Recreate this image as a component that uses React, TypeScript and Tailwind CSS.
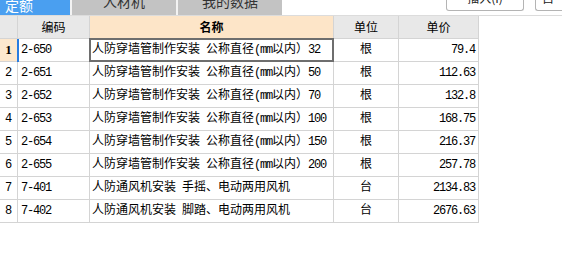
const rows = [
  { code: '2-650', name: '人防穿墙管制作安装 公称直径(mm以内）32', unit: '根', price: '79.4' },
  { code: '2-651', name: '人防穿墙管制作安装 公称直径(mm以内）50', unit: '根', price: '112.63' },
  { code: '2-652', name: '人防穿墙管制作安装 公称直径(mm以内）70', unit: '根', price: '132.8' },
  { code: '2-653', name: '人防穿墙管制作安装 公称直径(mm以内）100', unit: '根', price: '168.75' },
  { code: '2-654', name: '人防穿墙管制作安装 公称直径(mm以内）150', unit: '根', price: '216.37' },
  { code: '2-655', name: '人防穿墙管制作安装 公称直径(mm以内）200', unit: '根', price: '257.78' },
  { code: '7-401', name: '人防通风机安装 手摇、电动两用风机', unit: '台', price: '2134.83' },
  { code: '7-402', name: '人防通风机安装 脚踏、电动两用风机', unit: '台', price: '2676.63' },
]

// 半角字符收紧一点，接近宋体的宽度
function Mixed({ text }: { text: string }) {
  return (
    <>
      {text.split(/([\x20-\x7E]+)/).map((part, i) =>
        /^[\x20-\x7E]+$/.test(part) ? (
          <span key={i} className="tracking-[-1.2px] whitespace-pre">{part}</span>
        ) : (
          <span key={i}>{part}</span>
        ),
      )}
    </>
  )
}

export default function App() {
  const cell = 'h-[23px] border-r border-b border-[#d4d4d4] flex items-center'

  return (
    <div className="w-[562px] h-[254px] bg-white overflow-hidden font-['Liberation_Mono','Noto_Sans_CJK_SC',monospace] text-[12px] text-black">
      {/* 顶部标签 */}
      <div className="flex h-[16px] bg-[#f3f3f3] overflow-hidden border-b border-[#dcdcdc]">
        <div className="w-[70px] h-[15px] bg-[#4a9ff0] text-white overflow-hidden font-['Noto_Sans_CJK_SC',sans-serif] text-[14px]">
          <span className="block leading-[16px] -mt-[3px] pl-[5px]">定额</span>
        </div>
        <div className="w-[104px] h-[15px] ml-[2px] bg-[#c3c3c3] text-[#333] overflow-hidden font-['Noto_Sans_CJK_SC',sans-serif] text-[14px] text-center">
          <span className="block leading-[16px] -mt-[7px]">人材机</span>
        </div>
        <div className="w-[104px] h-[15px] ml-[2px] bg-[#c3c3c3] text-[#333] overflow-hidden font-['Noto_Sans_CJK_SC',sans-serif] text-[14px] text-center">
          <span className="block leading-[16px] -mt-[7px]">我的数据</span>
        </div>
        <div className="flex-1 flex justify-end bg-white pl-[164px] gap-[11px]">
          <div className="w-[78px] h-[11px] bg-white border border-t-0 border-[#b4b4b4] rounded-b-[3px] overflow-hidden text-center font-['Noto_Sans_CJK_SC',sans-serif] text-[#222]">
            <span className="block leading-[14px] -mt-[9px]">插入(I)</span>
          </div>
          <div className="flex-1 h-[11px] bg-white border border-t-0 border-r-0 border-[#b4b4b4] rounded-bl-[3px] overflow-hidden font-['Noto_Sans_CJK_SC',sans-serif] text-[#222] pl-[6px]">
            <span className="block leading-[14px] -mt-[9px]">自</span>
          </div>
        </div>
      </div>

      {/* 表格 */}
      <div className="grid grid-cols-[18px_72px_244px_65px_80px] w-[479px]">
        <div className={`${cell} bg-[#e8e8e8]`} />
        <div className={`${cell} bg-[#e8e8e8] justify-center font-['Noto_Sans_CJK_SC',sans-serif]`}>编码</div>
        <div className={`${cell} bg-[#fde5c8] justify-center font-['Noto_Sans_CJK_SC',sans-serif] font-bold`}>名称</div>
        <div className={`${cell} bg-[#e8e8e8] justify-center font-['Noto_Sans_CJK_SC',sans-serif]`}>单位</div>
        <div className={`${cell} bg-[#e8e8e8] justify-center font-['Noto_Sans_CJK_SC',sans-serif]`}>单价</div>

        {rows.map((r, i) => (
          <div key={r.code} className="contents">
            <div className={`${cell} justify-center ${i === 0 ? "bg-[#fde8ce] font-['Liberation_Serif',serif] font-bold text-[13px] text-black" : 'bg-white'}`}>
              {i + 1}
            </div>
            <div className={`${cell} relative pl-[3px] tracking-[-1.2px]`}>
              {i === 0 && <div className="absolute left-[-1px] top-0 bottom-[-1px] w-[2px] bg-[#2a7de1]" />}
              {r.code}
            </div>
            <div className={`${cell} relative pl-[2px] whitespace-nowrap`}>
              {i === 0 && <div className="absolute -inset-[1px] border-2 border-[#6e6e6e]" />}
              <Mixed text={r.name} />
            </div>
            <div className={`${cell} justify-center`}>{r.unit}</div>
            <div className={`${cell} justify-end pr-[3px] tracking-[-1.2px]`}>{r.price}</div>
          </div>
        ))}
      </div>
    </div>
  )
}
